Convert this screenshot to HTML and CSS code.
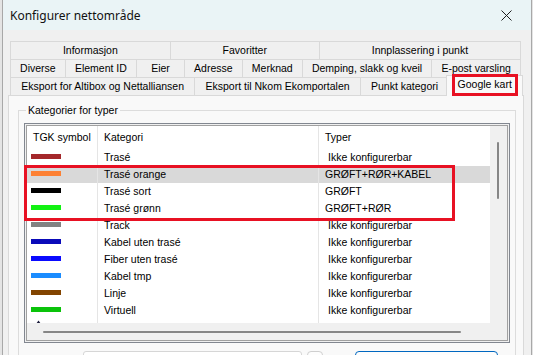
FILE: index.html
```html
<!DOCTYPE html>
<html lang="no">

<head>
  <meta charset="UTF-8">
  <meta name="viewport" content="width=device-width, initial-scale=1.0">
  <title>Konfigurer nettområde</title>

  <link rel="stylesheet" href="styles.css">
</head>

<body>
  <div class="dialog">
    <div class="titlebar">
      <span class="title">Konfigurer nettområde</span>
      <svg class="close" width="11" height="11" viewBox="0 0 11 11">
        <path d="M0.5 0.5L10.5 10.5M10.5 0.5L0.5 10.5" stroke="#1f1f1f" stroke-width="1" fill="none" />
      </svg>
    </div>

    <div class="content">
      <div class="tabs">
        <div class="tab-row">
          <div class="tab">Informasjon</div>
          <div class="tab">Favoritter</div>
          <div class="tab">Innplassering i punkt</div>
        </div>
        <div class="tab-row">
          <div class="tab">Diverse</div>
          <div class="tab">Element ID</div>
          <div class="tab wide">Eier</div>
          <div class="tab">Adresse</div>
          <div class="tab">Merknad</div>
          <div class="tab">Demping, slakk og kveil</div>
          <div class="tab">E-post varsling</div>
        </div>
        <div class="tab-row">
          <div class="tab">Eksport for Altibox og Nettalliansen</div>
          <div class="tab">Eksport til Nkom Ekomportalen</div>
          <div class="tab">Punkt kategori</div>
          <div class="tab active">Google kart</div>
        </div>
      </div>

      <div class="tab-page">
        <fieldset class="group">
          <legend>Kategorier for typer</legend>

          <div class="list">
            <div class="list-frame">
              <div class="list-body">
                <div class="row head">
                  <span class="cell">TGK symbol</span>
                  <span class="cell">Kategori</span>
                  <span class="cell">Typer</span>
                </div>
                <div class="row">
                  <span class="cell"><i class="swatch red"></i></span>
                  <span class="cell">Trasé</span>
                  <span class="cell indent">Ikke konfigurerbar</span>
                </div>
                <div class="row selected">
                  <span class="cell"><i class="swatch orange"></i></span>
                  <span class="cell">Trasé orange</span>
                  <span class="cell">GRØFT+RØR+KABEL</span>
                </div>
                <div class="row">
                  <span class="cell"><i class="swatch black"></i></span>
                  <span class="cell">Trasé sort</span>
                  <span class="cell">GRØFT</span>
                </div>
                <div class="row">
                  <span class="cell"><i class="swatch green"></i></span>
                  <span class="cell">Trasé grønn</span>
                  <span class="cell">GRØFT+RØR</span>
                </div>
                <div class="row">
                  <span class="cell"><i class="swatch gray"></i></span>
                  <span class="cell">Track</span>
                  <span class="cell indent">Ikke konfigurerbar</span>
                </div>
                <div class="row">
                  <span class="cell"><i class="swatch navy"></i></span>
                  <span class="cell">Kabel uten trasé</span>
                  <span class="cell indent">Ikke konfigurerbar</span>
                </div>
                <div class="row">
                  <span class="cell"><i class="swatch blue"></i></span>
                  <span class="cell">Fiber uten trasé</span>
                  <span class="cell indent">Ikke konfigurerbar</span>
                </div>
                <div class="row">
                  <span class="cell"><i class="swatch sky"></i></span>
                  <span class="cell">Kabel tmp</span>
                  <span class="cell indent">Ikke konfigurerbar</span>
                </div>
                <div class="row">
                  <span class="cell"><i class="swatch brown"></i></span>
                  <span class="cell">Linje</span>
                  <span class="cell indent">Ikke konfigurerbar</span>
                </div>
                <div class="row">
                  <span class="cell"><i class="swatch lime"></i></span>
                  <span class="cell">Virtuell</span>
                  <span class="cell indent">Ikke konfigurerbar</span>
                </div>
                <div class="row">
                  <span class="cell">
                    <svg class="glyph" width="11" height="6" viewBox="0 0 11 6">
                      <path d="M0 5H3L5.5 1.5L8 5H11" stroke="#1c1c3c" stroke-width="1.2" fill="none" />
                    </svg>
                  </span>
                  <span class="cell"></span>
                  <span class="cell"></span>
                </div>
              </div>
              <div class="vscroll"><span class="thumb"></span></div>
              <div class="hscroll"><span class="thumb"></span></div>
            </div>
          </div>

          <div class="field-row">
            <span class="label">Type:</span>
            <span class="input"></span>
            <span class="small-btn"></span>
            <span class="btn"></span>
          </div>
        </fieldset>
      </div>
    </div>

    <!-- markering lagt oppå skjermbildet -->
    <div class="mark mark-tab"></div>
    <div class="mark mark-rows"></div>
  </div>
</body>

</html>
```

FILE: styles.css
```css
* {
  margin: 0;
  padding: 0;
  box-sizing: border-box;
}

body {
  background: #e4e4e4;
  overflow: hidden;
  font-family: "Liberation Sans", Arial, sans-serif;
  font-size: 10.5px;
  color: #000;
}

.dialog {
  position: relative;
  margin-left: 2px;
  width: 530px;
  height: 355px;
  border-left: 1px solid #a8a8a8;
  border-right: 1px solid #a8a8a8;
  background: #f0f0f0;
  overflow: hidden;
}

.titlebar {
  height: 30px;
  background: #eaf4f6;
  display: flex;
  align-items: center;
  justify-content: space-between;
  padding: 0 19px 0 7px;
  font-family: "Noto Sans", "Open Sans", sans-serif;
  font-size: 12px;
  color: #111;
}

.close {
  display: block;
}

.content {
  padding: 11px 0 0 5px;
}

/* faner */
.tabs {
  margin-left: 2px;
  width: 511px;
}

.tab-row {
  display: flex;
  height: 18px;
}

.tab {
  flex: 1 1 auto;
  border-top: 1px solid #d9d9d9;
  border-left: 1px solid #d9d9d9;
  text-align: center;
  line-height: 17px;
  padding: 0 9px;
  white-space: nowrap;
}

.tab:last-child {
  border-right: 1px solid #d9d9d9;
}

.tab.wide {
  min-width: 48px;
}

.tab.active {
  position: relative;
  z-index: 1;
  margin: -2px -2px -1px -2px;
  padding-top: 1px;
  line-height: 15px;
  background: #f9f9f9;
  border-right: 1px solid #d9d9d9;
}

.tab-page {
  width: 516px;
  height: 300px;
  background: #f9f9f9;
  border: 1px solid #d9d9d9;
  padding: 8px 7px 0 9px;
}

.group {
  width: 498px;
  border: 1px solid #dcdcdc;
  padding: 0 5px;
}

.group legend {
  margin-left: 2px;
  padding: 0 2px;
  line-height: 13px;
}

/* liste */
.list {
  margin-top: 6px;
  border: 1px solid #828790;
  padding: 1px;
  background: #f0f0f0;
}

.list-frame {
  border: 1px solid #a0a0a0;
  display: grid;
  grid-template-columns: 1fr 17px;
  grid-template-rows: 197px 17px;
}

.list-body {
  background: #fff;
  overflow: hidden;
}

.row {
  display: grid;
  grid-template-columns: 70px 221px 1fr;
  height: 17px;
}

.row.head {
  height: 23px;
}

.row.selected {
  background: #d9d9d9;
}

.cell {
  line-height: 17px;
  padding-left: 6px;
  white-space: nowrap;
}

.head .cell {
  line-height: 23px;
}

.cell + .cell {
  border-left: 1px solid #e5e5e5;
}

.cell.indent {
  padding-left: 9px;
}

.swatch {
  display: block;
  width: 30px;
  height: 5px;
  margin: 5px 0 0 -2px;
}

.glyph {
  display: block;
  margin: 1px 0 0 0;
}

.red { background: #a4282b; }
.orange { background: #fd8134; }
.black { background: #000; }
.green { background: #13f213; }
.gray { background: #828282; }
.navy { background: #0a0ab9; }
.blue { background: #0a0aff; }
.sky { background: #1a8cff; }
.brown { background: #824400; }
.lime { background: #0ac30a; }

.vscroll {
  background: #f0f0f0;
}

.vscroll .thumb {
  display: block;
  width: 2px;
  height: 57px;
  margin: 16px 0 0 7px;
  background: #868686;
  border-radius: 1px;
}

.hscroll {
  grid-column: 1 / 3;
  background: #f0f0f0;
}

.hscroll .thumb {
  display: block;
  width: 418px;
  height: 2px;
  margin: 8px 0 0 16px;
  background: #868686;
  border-radius: 1px;
}

/* felt under lista */
.field-row {
  display: flex;
  margin-top: 8px;
  height: 23px;
}

.label {
  width: 59px;
  line-height: 23px;
  margin-top: -1px;
}

.input {
  width: 219px;
  background: #fff;
  border: 1px solid #d6d6d6;
  border-radius: 3px;
}

.small-btn {
  width: 16px;
  margin-left: 5px;
  background: #fdfdfd;
  border: 1px solid #cfcfcf;
  border-radius: 4px;
}

.btn {
  width: 143px;
  margin-left: 32px;
  background: #fdfdfd;
  border: 1px solid #0067c0;
  border-radius: 4px;
}

/* røde markeringer */
.mark {
  position: absolute;
  border: 3px solid #e81123;
  pointer-events: none;
  z-index: 5;
}

.mark-tab {
  left: 449px;
  top: 74px;
  width: 66px;
  height: 22px;
}

.mark-rows {
  left: 21px;
  top: 165px;
  width: 431px;
  height: 56px;
}
```
